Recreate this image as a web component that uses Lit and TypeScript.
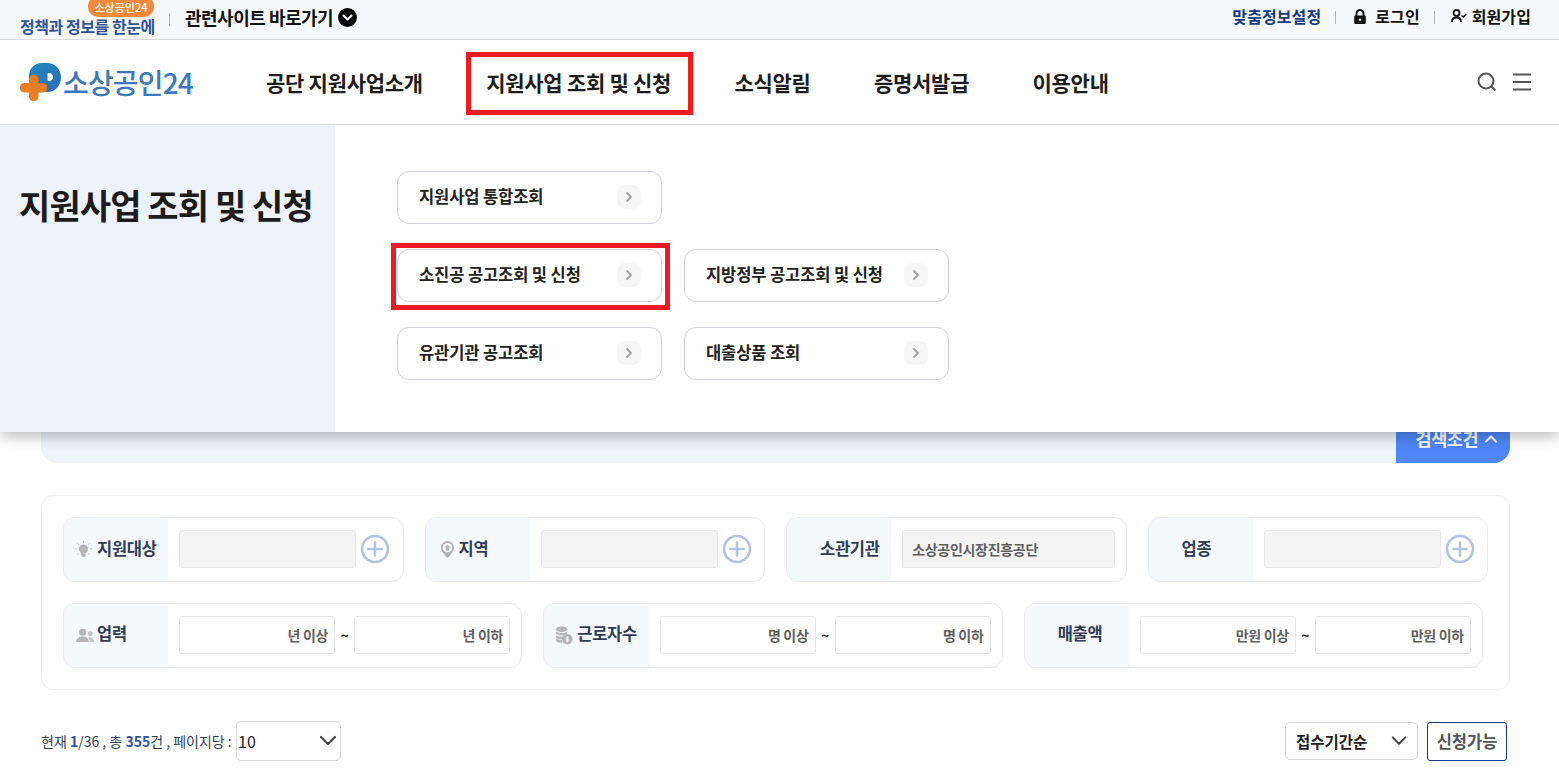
import { LitElement, html, css, svg } from "lit";
import { customElement } from "lit/decorators.js";

const chevron = html`<svg viewBox="0 0 24 24" width="24" height="24"><path d="M10 8l4 4-4 4" fill="none" stroke="#a5a5a5" stroke-width="2" stroke-linecap="round" stroke-linejoin="round"/></svg>`;
const plus = html`<svg class="plus" viewBox="0 0 30 30" width="30" height="30"><circle cx="15" cy="15" r="13" fill="#fff" stroke="#b4c3e4" stroke-width="2.6"/><path d="M15 8.5v13M8.5 15h13" stroke="#b4c3e4" stroke-width="2.6" stroke-linecap="round"/></svg>`;
const bulb = svg`<svg viewBox="0 0 20 20" width="19" height="19"><circle cx="10" cy="9.500" r="4.800" fill="#b5b5b5"/><rect x="7.800" y="14" width="4.400" height="3.500" rx="1" fill="#b5b5b5"/><path d="M10 1v2M3.500 3.500l1.500 1.500M16.500 3.500L15 5M1 9.500h2M17 9.500h2M3.500 15.500L5 14M16.500 15.500L15 14" stroke="#c4c4c4" stroke-width="1"/></svg>`;
const pin = svg`<svg viewBox="0 0 16 20" width="15" height="19" style="margin-left:4px"><path d="M8 1a7 7 0 0 0-7 7c0 4.500 7 11 7 11s7-6.500 7-11a7 7 0 0 0-7-7z" fill="#b2b2b2"/><circle cx="8" cy="8" r="5" fill="#fff"/><path d="M8 5l3 2.700h-1V11H6V7.700H5z" fill="#b2b2b2"/></svg>`;
const people = svg`<svg viewBox="0 0 19 16" width="18" height="15" style="margin-left:2px"><circle cx="7" cy="4.500" r="3.800" fill="#b5b5b5"/><path d="M0 15c0-4 3-6 7-6s6.500 2 6.500 6z" fill="#b5b5b5"/><circle cx="15" cy="6" r="2.600" fill="#c2c2c2"/><path d="M14.500 15c0-2-.5-3.500-1.800-5 2.800-.6 6.300.5 6.300 5z" fill="#c2c2c2"/></svg>`;
const coins = svg`<svg viewBox="0 0 19 20" width="18" height="19" style="margin-left:1px"><ellipse cx="7" cy="3.500" rx="6" ry="3" fill="#b5b5b5"/><path d="M1 5.500c1 2.500 11 2.500 12 0v2.500c-1 2.500-11 2.500-12 0zM1 9c1 2.500 7 2.800 8.500 1.800L8 14c-3 .3-6-.5-7-2zM1 13c1 1.500 4 2 6.500 1.800l.3 2.700c-3 .2-6-.5-6.800-2z" fill="#b5b5b5"/><circle cx="13" cy="14" r="5.500" fill="#b5b5b5"/><path d="M13 10.800v6.400M14.500 12.300h-2.200a.9.900 0 0 0 0 1.800h1.400a.9.900 0 0 1 0 1.800h-2.200" fill="none" stroke="#fff" stroke-width=".9"/></svg>`;

@customElement("app-root")
export class AppRoot extends LitElement {
  static styles = css`
    :host { display: block; width: 1559px; height: 772px; overflow: hidden; background: #fff; font-family: "Noto Sans CJK KR", "Noto Sans", sans-serif; color: #222; }
    .top { height: 39px; background: #f7f8fb; border-bottom: 1px solid #dcdcdc; display: flex; align-items: center; padding: 0 28px 0 20px; font-weight: 700; }
    .brand { position: relative; width: 135px; padding-top: 13px; font-size: 16px; line-height: 24px; color: #2f5597; white-space: nowrap; letter-spacing: -.45px; }
    .badge { position: absolute; left: 68px; top: -5px; width: 66px; height: 21px; padding-top: 2px; box-sizing: border-box; background: #ef8a3c; color: #fff; font-size: 11px; font-weight: 500; line-height: 19px; text-align: center; letter-spacing: 0; border-radius: 10px; }
    .sep { width: 1px; height: 13px; background: #b5b5b5; }
    .brand + .sep { margin: 0 15px 0 14px; }
    .sites { font-size: 18px; letter-spacing: -.5px; color: #111; line-height: 24px; margin-top: -6px; }
    .sites-ico { margin-left: 5px; display: block; margin-top: -5px; }
    .grow { flex: 1; }
    .tl { font-size: 16px; letter-spacing: .1px; line-height: 24px; color: #111; white-space: nowrap; }
    .tl.blue { color: #123a86; }
    .right-links { display: flex; align-items: center; margin-top: -7px; }
    .right-links .sep { margin: 2px 17px 0 14px; }
    .right-links svg { display: block; margin-right: 8px; }
    .right-links svg.user { margin: 0 5px 0 -1px; }
    .header { height: 84px; border-bottom: 1px solid #dcdcdc; display: flex; align-items: center; padding: 0 28px 0 20px; }
    .logo { display: flex; align-items: center; width: 246px; }
    .logo svg { display: block; margin-right: 1px; }
    .logo span { font-size: 28px; font-weight: 500; color: #3b78bd; letter-spacing: -.85px; line-height: 40px; }
    .nav { display: flex; gap: 63.300px; font-size: 21px; font-weight: 700; letter-spacing: -.27px; color: #1c1c1c; line-height: 30px; }
    .nav span { position: relative; white-space: nowrap; }
    .nav .on::after { content: ""; position: absolute; left: -20px; right: -22px; top: -15px; bottom: -18px; border: 5px solid #ed1c24; }
    .hicons { display: flex; align-items: center; gap: 16px; }
    .hicons svg { display: block; }
    .main { position: relative; display: flow-root; }
    .strip { position: relative; margin: 300px 49px 0 41px; height: 38px; background: #eff3fa; border-radius: 0 0 16px 16px; display: flex; justify-content: flex-end; }
    .tab { width: 114px; height: 38px; background: #4f87f8; border-radius: 0 0 16px 0; color: #fff; font-size: 17.500px; font-weight: 700; letter-spacing: -.5px; display: flex; align-items: center; justify-content: flex-end; gap: 6px; padding: 0 12px 11px 0; box-sizing: border-box; }
    .tab svg { display: block; }
    .filters { margin: 32px 49px 0 41px; height: 195px; box-sizing: border-box; border: 1px solid #f0f0f3; border-radius: 12px; padding: 21px 21px 0; display: flex; flex-direction: column; gap: 21px; }
    .row { display: flex; gap: 21px; }
    .row.r2 { padding-right: 5px; }
    .card { flex: 1; min-width: 0; height: 65px; box-sizing: border-box; border: 1px solid #e9e9ee; border-radius: 12px; overflow: hidden; display: flex; }
    .label { width: 104.200px; flex: none; background: #f5f8fe; display: flex; align-items: center; padding-left: 10px; box-sizing: border-box; font-size: 16.500px; font-weight: 700; letter-spacing: -.3px; color: #333c55; white-space: nowrap; }
    .ico { width: 23px; flex: none; display: flex; align-items: center; }
    .ico svg { display: block; flex: none; }
    .t { margin-top: -4px; }
    .r2 .t { margin-top: -6px; }
    .body { flex: 1; min-width: 0; display: flex; align-items: center; padding: 0 0 2px 11px; }
    .field { height: 38px; box-sizing: border-box; border: 1px solid #e8e8ea; border-radius: 3px; background: #f4f4f4; font-size: 14px; font-weight: 700; letter-spacing: -.3px; color: #606060; display: flex; align-items: center; padding: 0 9px; flex: none; width: 177px; white-space: nowrap; }
    .field.wide { width: 213px; }
    .plus { display: block; margin-left: 4px; flex: none; }
    .field.num { width: 156px; background: #fff; justify-content: flex-end; padding-right: 6px; }
    .tilde { width: 19px; text-align: center; font-size: 14px; font-weight: 700; color: #333; flex: none; }
    .foot { margin: 31px 52px 0 41px; display: flex; align-items: center; height: 40px; }
    .count { font-size: 14px; color: #333c55; white-space: nowrap; width: 195px; }
    .count b { color: #2f5597; font-weight: 700; }
    .sel { position: relative; box-sizing: border-box; border: 1px solid #d9d9d9; border-radius: 5px; background: #fff; display: flex; align-items: center; }
    .sel svg { position: absolute; display: block; }
    .sel.page { width: 105px; height: 40px; font-size: 16px; color: #222; padding-left: 1px; }
    .sel.page svg { right: 2px; top: 11px; }
    .sel.sort { width: 133px; height: 38px; font-size: 15.500px; font-weight: 700; color: #222; padding-left: 10px; margin-right: 9px; }
    .sel.sort svg { right: 9px; top: 10px; width: 18px; }
    .btn { width: 80px; height: 39px; box-sizing: border-box; border: 1px solid #123a86; border-radius: 3px; display: flex; align-items: center; justify-content: center; font-size: 16.500px; font-weight: 700; color: #555; }
    .mega { position: absolute; left: 0; right: 0; top: 0; height: 307px; background: #fff; display: flex; box-shadow: 0 4px 14px rgba(0,0,0,.28); clip-path: inset(0 0 -40px 0); }
    .mega-title { width: 335px; flex: none; background: #eef2fb; box-sizing: border-box; padding: 57px 0 0 19px; font-size: 34px; font-weight: 700; letter-spacing: -.9px; line-height: 46px; color: #1c1c1c; white-space: nowrap; }
    .grid { margin: 46px 0 0 62px; display: grid; grid-template-columns: 265px 265px; grid-auto-rows: 53px; gap: 25px 22px; align-content: start; }
    .item { position: relative; box-sizing: border-box; border: 1px solid #d3d3dd; border-radius: 12px; background: #fff; display: flex; align-items: center; justify-content: space-between; padding: 0 20px 0 21px; font-size: 16.500px; font-weight: 700; letter-spacing: -.1px; color: #222; white-space: nowrap; }
    .item span { margin-top: -4px; }
    .item.on::after { content: ""; position: absolute; left: -7px; right: -9px; top: -7px; bottom: -9px; border: 5px solid #ed1c24; }
    .chev { width: 24px; height: 24px; border-radius: 8px; background: #f6f6f6; flex: none; margin-top: -2px; }
    .chev svg { display: block; }
    .first { grid-column: 1 / 3; width: 265px; }
  `;

  private item(t: string, cls = "") {
    return html`<div class="item ${cls}"><span>${t}</span><div class="chev">${chevron}</div></div>`;
  }

  private labelCard(label: string, icon: unknown, body: unknown) {
    return html`<div class="card"><div class="label"><div class="ico">${icon}</div><span class="t">${label}</span></div><div class="body">${body}</div></div>`;
  }

  private range(a: string, b: string) {
    return html`<div class="field num">${a}</div><div class="tilde">~</div><div class="field num">${b}</div>`;
  }

  render() {
    const dn = html`<svg width="20" height="16" viewBox="0 0 20 16"><path d="M3 4l7 7 7-7" fill="none" stroke="#444" stroke-width="2.2" stroke-linecap="round" stroke-linejoin="round"/></svg>`;
    return html`
      <div class="top">
        <div class="brand"><span class="badge">소상공인24</span>정책과 정보를 한눈에</div>
        <div class="sep"></div>
        <div class="sites">관련사이트 바로가기</div>
        <svg class="sites-ico" width="19" height="19" viewBox="0 0 19 19"><circle cx="9.500" cy="9.500" r="9.500" fill="#000"/><path d="M5.500 7.500l4 4 4-4" fill="none" stroke="#fff" stroke-width="2" stroke-linecap="round" stroke-linejoin="round"/></svg>
        <div class="grow"></div>
        <div class="right-links">
          <span class="tl blue">맞춤정보설정</span>
          <div class="sep"></div>
          <svg width="14" height="15" viewBox="0 0 14 15"><path d="M3.500 7V4.500a3.500 3.500 0 0 1 7 0V7" fill="none" stroke="#111" stroke-width="2"/><rect x="1.200" y="6.500" width="11.600" height="8.500" rx="1.300" fill="#111"/><circle cx="7" cy="10.700" r="1.300" fill="#fff"/></svg>
          <span class="tl">로그인</span>
          <div class="sep"></div>
          <svg class="user" width="16" height="14" viewBox="0 0 16 14"><circle cx="5.500" cy="4" r="3" fill="none" stroke="#111" stroke-width="1.800"/><path d="M1 13c0-3 2-4.500 4.500-4.500S10 10 10 13" fill="none" stroke="#111" stroke-width="1.800"/><path d="M10.500 6.500l1.800 1.500 3-3" fill="none" stroke="#111" stroke-width="1.500"/></svg>
          <span class="tl">회원가입</span>
        </div>
      </div>

      <div class="header">
        <div class="logo">
          <svg width="42" height="38" viewBox="0 0 42 38">
            <defs><linearGradient id="lg" x1="0" y1="0" x2="1" y2="1"><stop offset="0" stop-color="#1f86c2"/><stop offset="1" stop-color="#2f6fb7"/></linearGradient></defs>
            <path fill-rule="evenodd" d="M9 24V13C9 5.500 14.500 0 22 0h5c8 0 14 6 14 14.500S35 29 27 29H14zM29 10c-1 0-1.500.5-1.500 1.500v5c0 1 .5 1.500 1.500 1.500 2.500 0 4-1.700 4-4s-1.500-4-4-4z" fill="url(#lg)"/>
            <rect x="9" y="12" width="9.500" height="26" rx="4.500" fill="#e87d24"/>
            <rect x="0" y="20" width="27" height="9.500" rx="4.500" fill="#e87d24"/>
          </svg>
          <span>소상공인24</span>
        </div>
        <nav class="nav">
          <span>공단 지원사업소개</span>
          <span class="on">지원사업 조회 및 신청</span>
          <span>소식알림</span>
          <span>증명서발급</span>
          <span>이용안내</span>
        </nav>
        <div class="grow"></div>
        <div class="hicons">
          <svg width="20" height="20" viewBox="0 0 20 20"><circle cx="9" cy="9" r="7.500" fill="none" stroke="#555" stroke-width="2"/><path d="M14.500 14.500l4 4" stroke="#555" stroke-width="2"/></svg>
          <svg width="18" height="18" viewBox="0 0 18 18"><path d="M0 1.500h18M0 9h18M0 16.500h18" stroke="#555" stroke-width="1.800"/></svg>
        </div>
      </div>

      <div class="main">
        <div class="strip">
          <div class="tab">검색조건 <svg width="14" height="10" viewBox="0 0 14 10"><path d="M2 7.500l5-5 5 5" fill="none" stroke="#fff" stroke-width="2" stroke-linecap="round"/></svg></div>
        </div>

        <div class="filters">
          <div class="row">
            ${this.labelCard("지원대상", bulb, html`<div class="field"></div>${plus}`)}
            ${this.labelCard("지역", pin, html`<div class="field"></div>${plus}`)}
            ${this.labelCard("소관기관", null, html`<div class="field wide">소상공인시장진흥공단</div>`)}
            ${this.labelCard("업종", null, html`<div class="field"></div>${plus}`)}
          </div>
          <div class="row r2">
            ${this.labelCard("업력", people, this.range("년 이상", "년 이하"))}
            ${this.labelCard("근로자수", coins, this.range("명 이상", "명 이하"))}
            ${this.labelCard("매출액", null, this.range("만원 이상", "만원 이하"))}
          </div>
        </div>

        <div class="foot">
          <div class="count">현재 <b>1</b>/36 , 총 <b>355</b>건 , 페이지당 :</div>
          <div class="sel page">10${dn}</div>
          <div class="grow"></div>
          <div class="sel sort">접수기간순${dn}</div>
          <div class="btn">신청가능</div>
        </div>

        <div class="mega">
          <div class="mega-title">지원사업 조회 및 신청</div>
          <div class="grid">
            ${this.item("지원사업 통합조회", "first")}
            ${this.item("소진공 공고조회 및 신청", "on")}
            ${this.item("지방정부 공고조회 및 신청")}
            ${this.item("유관기관 공고조회")}
            ${this.item("대출상품 조회")}
          </div>
        </div>
      </div>
    `;
  }
}
